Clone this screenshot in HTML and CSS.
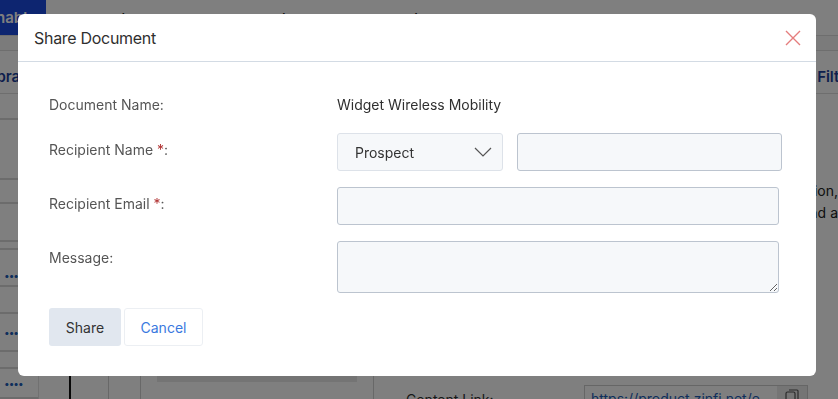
FILE: index.html
```html
<!DOCTYPE html>
<html lang="en">
<head>
  <meta charset="UTF-8">
  <title>Share Document</title>
  <link rel="stylesheet" href="styles.css">
</head>
<body>
  <!-- page behind the dialog -->
  <div class="page">
    <nav class="topnav">
      <div class="brand-tab"><span>Enable</span></div>
      <a>Marketing</a>
      <a>Collaboration</a>
      <a>Analytics</a>
      <a>Reports</a>
    </nav>
    <div class="tabs-line"></div>
    <div class="subbar">
      <span class="lib">Library</span>
      <span class="filter">Filter</span>
    </div>
    <div class="main">
      <aside class="side">
        <div class="srow h26"></div>
        <div class="srow h60"></div>
        <div class="srow h24"></div>
        <div class="srow h38"></div>
        <div class="srow h8"></div>
        <div class="srow h37 dots low">••••</div>
        <div class="srow h27"></div>
        <div class="srow h38 dots">••••</div>
        <div class="srow h17"></div>
        <div class="srow h30 dots">••••</div>
      </aside>
      <section class="content">
        <div class="desc">
          <p>information,</p>
          <p>and a</p>
        </div>
        <div class="bottom">
          <div class="cols">
            <div class="col c1"></div>
            <div class="col c2"></div>
            <div class="col c3"></div>
            <div class="col c4"><div class="bar"></div></div>
          </div>
          <div class="link-row">
            <span class="link-label">Content Link:</span>
            <div class="link-box">
              <span>https://product.zinfi.net/e</span>
              <span class="copy">
                <svg width="14" height="14" viewBox="0 0 14 14"><rect x="1" y="3" width="9" height="10" rx="1.5" stroke="#555" stroke-width="1.2" fill="none"/><path d="M4 1H12a1 1 0 0 1 1 1V10" stroke="#555" stroke-width="1.2" fill="none"/></svg>
              </span>
            </div>
          </div>
        </div>
      </section>
    </div>
  </div>

  <div class="overlay">
    <div class="modal">
      <div class="modal-header">
        <h2>Share Document</h2>
        <button class="close" aria-label="Close">
          <svg width="16" height="16" viewBox="0 0 16 16"><path d="M1 1L15 15M15 1L1 15" stroke="#e57d7d" stroke-width="1.4" fill="none"/></svg>
        </button>
      </div>
      <div class="modal-body">
        <div class="form-row">
          <label>Document Name:</label>
          <div class="doc-name">Widget Wireless Mobility</div>
        </div>
        <div class="form-row">
          <label>Recipient Name <span class="req">*</span>:</label>
          <div class="field-pair">
            <div class="select">
              <span>Prospect</span>
              <svg width="18" height="10" viewBox="0 0 18 10"><path d="M1 1L9 9L17 1" stroke="#555" stroke-width="1.2" fill="none"/></svg>
            </div>
            <input class="input name" type="text">
          </div>
        </div>
        <div class="form-row">
          <label>Recipient Email <span class="req">*</span>:</label>
          <input class="input email" type="text">
        </div>
        <div class="form-row">
          <label>Message:</label>
          <textarea class="input message"></textarea>
        </div>
        <div class="actions">
          <button class="btn share">Share</button>
          <button class="btn cancel">Cancel</button>
        </div>
      </div>
    </div>
  </div>
</body>
</html>
```

FILE: styles.css
```css
html, body {
  margin: 0;
  height: 100%;
  overflow: hidden;
}
body {
  font-family: Inter, "Noto Sans", "Liberation Sans", sans-serif;
  background: #ffffff;
  color: #333333;
}

/* background page */
.page {
  width: 838px;
  height: 399px;
  display: flex;
  flex-direction: column;
}
.topnav {
  display: flex;
  align-items: center;
  height: 35px;
  font-size: 15px;
  color: #111;
}
.brand-tab {
  width: 46px;
  height: 35px;
  background: #1a4ae0;
  color: #fff;
  overflow: hidden;
  display: flex;
  align-items: center;
  font-weight: 600;
}
.brand-tab span {
  margin-left: -13px;
}
.topnav a {
  margin-left: 26px;
  margin-right: 40px;
  padding-top: 4px;
}
.tabs-line {
  height: 14px;
  border-top: 1px solid #dcdcdc;
  border-bottom: 1px solid #dcdcdc;
  background: #f7f7f7;
}
.subbar {
  height: 44px;
  box-sizing: border-box;
  padding-top: 9px;
  display: flex;
  align-items: center;
  justify-content: space-between;
  border-bottom: 1px solid #dcdcdc;
  font-size: 15px;
  font-weight: 600;
  color: #1b3f9a;
}
.lib {
  margin-left: -16px;
}
.filter {
  margin-right: -16px;
}
.main {
  flex: 1;
  display: flex;
}
.side {
  width: 38px;
  flex-shrink: 0;
  border-right: 1px solid #e2e2e2;
  display: flex;
  flex-direction: column;
}
.srow {
  flex-shrink: 0;
  border-bottom: 2px solid #d8d8d8;
  font-size: 10px;
  color: #1d5db8;
  display: flex;
  align-items: center;
  padding-left: 4px;
  box-sizing: border-box;
  letter-spacing: -1px;
}
.srow.low {
  align-items: flex-end;
  padding-bottom: 4px;
}
.h8 { height: 8px; }
.h17 { height: 17px; }
.h24 { height: 24px; }
.h26 { height: 26px; }
.h27 { height: 27px; }
.h30 { height: 30px; }
.h37 { height: 37px; }
.h38 { height: 38px; }
.h60 { height: 60px; }
.content {
  flex: 1;
  display: flex;
  flex-direction: column;
}
.desc {
  flex: 1;
  display: flex;
  flex-direction: column;
  align-items: flex-end;
  padding-top: 88px;
  font-size: 14px;
  color: #222;
}
.desc p {
  margin: 0 0 5px 0;
  line-height: 17px;
}
.bottom {
  height: 24px;
  display: flex;
}
.cols {
  display: flex;
  flex-shrink: 0;
}
.col {
  flex-shrink: 0;
  border-right: 1px solid #d0d0d0;
}
.c1 { width: 30px; border-right: 2px solid #111; }
.c2 { width: 37px; }
.c3 { width: 31px; }
.c4 { padding: 0 16px; }
.bar {
  height: 7px;
  background: #e9e9e9;
  width: 200px;
}
.link-row {
  flex: 1;
  display: flex;
  align-items: flex-end;
  padding-left: 32px;
  font-size: 14px;
}
.link-label {
  width: 178px;
  flex-shrink: 0;
  margin-bottom: -9px;
}
.link-box {
  width: 222px;
  flex-shrink: 0;
  height: 13px;
  border: 1px solid #ccc;
  border-bottom: none;
  display: flex;
  justify-content: space-between;
  color: #1d5db8;
  font-size: 14px;
  overflow: hidden;
}
.link-box span:first-child {
  padding: 4px 0 0 6px;
}
.copy {
  width: 30px;
  background: #eaeaea;
  display: flex;
  justify-content: center;
  padding-top: 3px;
}

/* dialog */
.overlay {
  position: fixed;
  inset: 0;
  background: rgba(0, 0, 0, 0.5);
}
.modal {
  margin: 14px 0 0 18px;
  width: 798px;
  height: 362px;
  background: #ffffff;
  border-radius: 6px;
  display: flex;
  flex-direction: column;
}
.modal-header {
  height: 48px;
  border-bottom: 1px solid #d3dbe4;
  display: flex;
  align-items: center;
  justify-content: space-between;
  padding: 0 15px 0 16px;
  box-sizing: border-box;
}
.modal-header h2 {
  margin: 0;
  font-size: 16px;
  font-weight: 400;
  letter-spacing: -0.3px;
  color: #2f2f2f;
}
.close {
  border: none;
  background: none;
  padding: 0;
  width: 16px;
  height: 16px;
  display: flex;
}
.modal-body {
  padding: 33px 35px 0 31px;
}
.form-row {
  display: grid;
  grid-template-columns: 288px 1fr;
  align-items: start;
  margin-bottom: 16px;
}
.form-row:first-child {
  margin-bottom: 18px;
}
.form-row label {
  font-size: 14px;
  line-height: 20px;
  color: #555555;
  padding-top: 7px;
}
.form-row:first-child label {
  padding-top: 0;
}
.req {
  color: #b03030;
}
.doc-name {
  font-size: 14px;
  line-height: 20px;
  color: #2f2f2f;
}
.field-pair {
  display: flex;
  gap: 14px;
}
.select {
  width: 166px;
  height: 38px;
  box-sizing: border-box;
  border: 1px solid #dde2e9;
  border-radius: 3px;
  background: #f6f8fa;
  display: flex;
  align-items: center;
  justify-content: space-between;
  padding: 0 10px 0 17px;
  font-size: 14px;
  color: #333;
}
.input {
  display: block;
  box-sizing: border-box;
  border: 1px solid #bcc4cf;
  border-radius: 3px;
  background: #f6f8fa;
  font: inherit;
  margin: 0;
  padding: 0 10px;
}
.name {
  width: 265px;
  height: 38px;
}
.email {
  width: 442px;
  height: 38px;
}
.message {
  width: 442px;
  height: 52px;
  resize: vertical;
}
.actions {
  display: flex;
  gap: 3px;
  margin-top: -1px;
}
.btn {
  height: 38px;
  border-radius: 3px;
  font-family: inherit;
  font-size: 14px;
  padding: 0;
}
.share {
  width: 72px;
  border: none;
  background: #e1e7ef;
  color: #333333;
}
.cancel {
  width: 79px;
  border: 1px solid #eceff3;
  background: #ffffff;
  color: #3a79e0;
}
```
